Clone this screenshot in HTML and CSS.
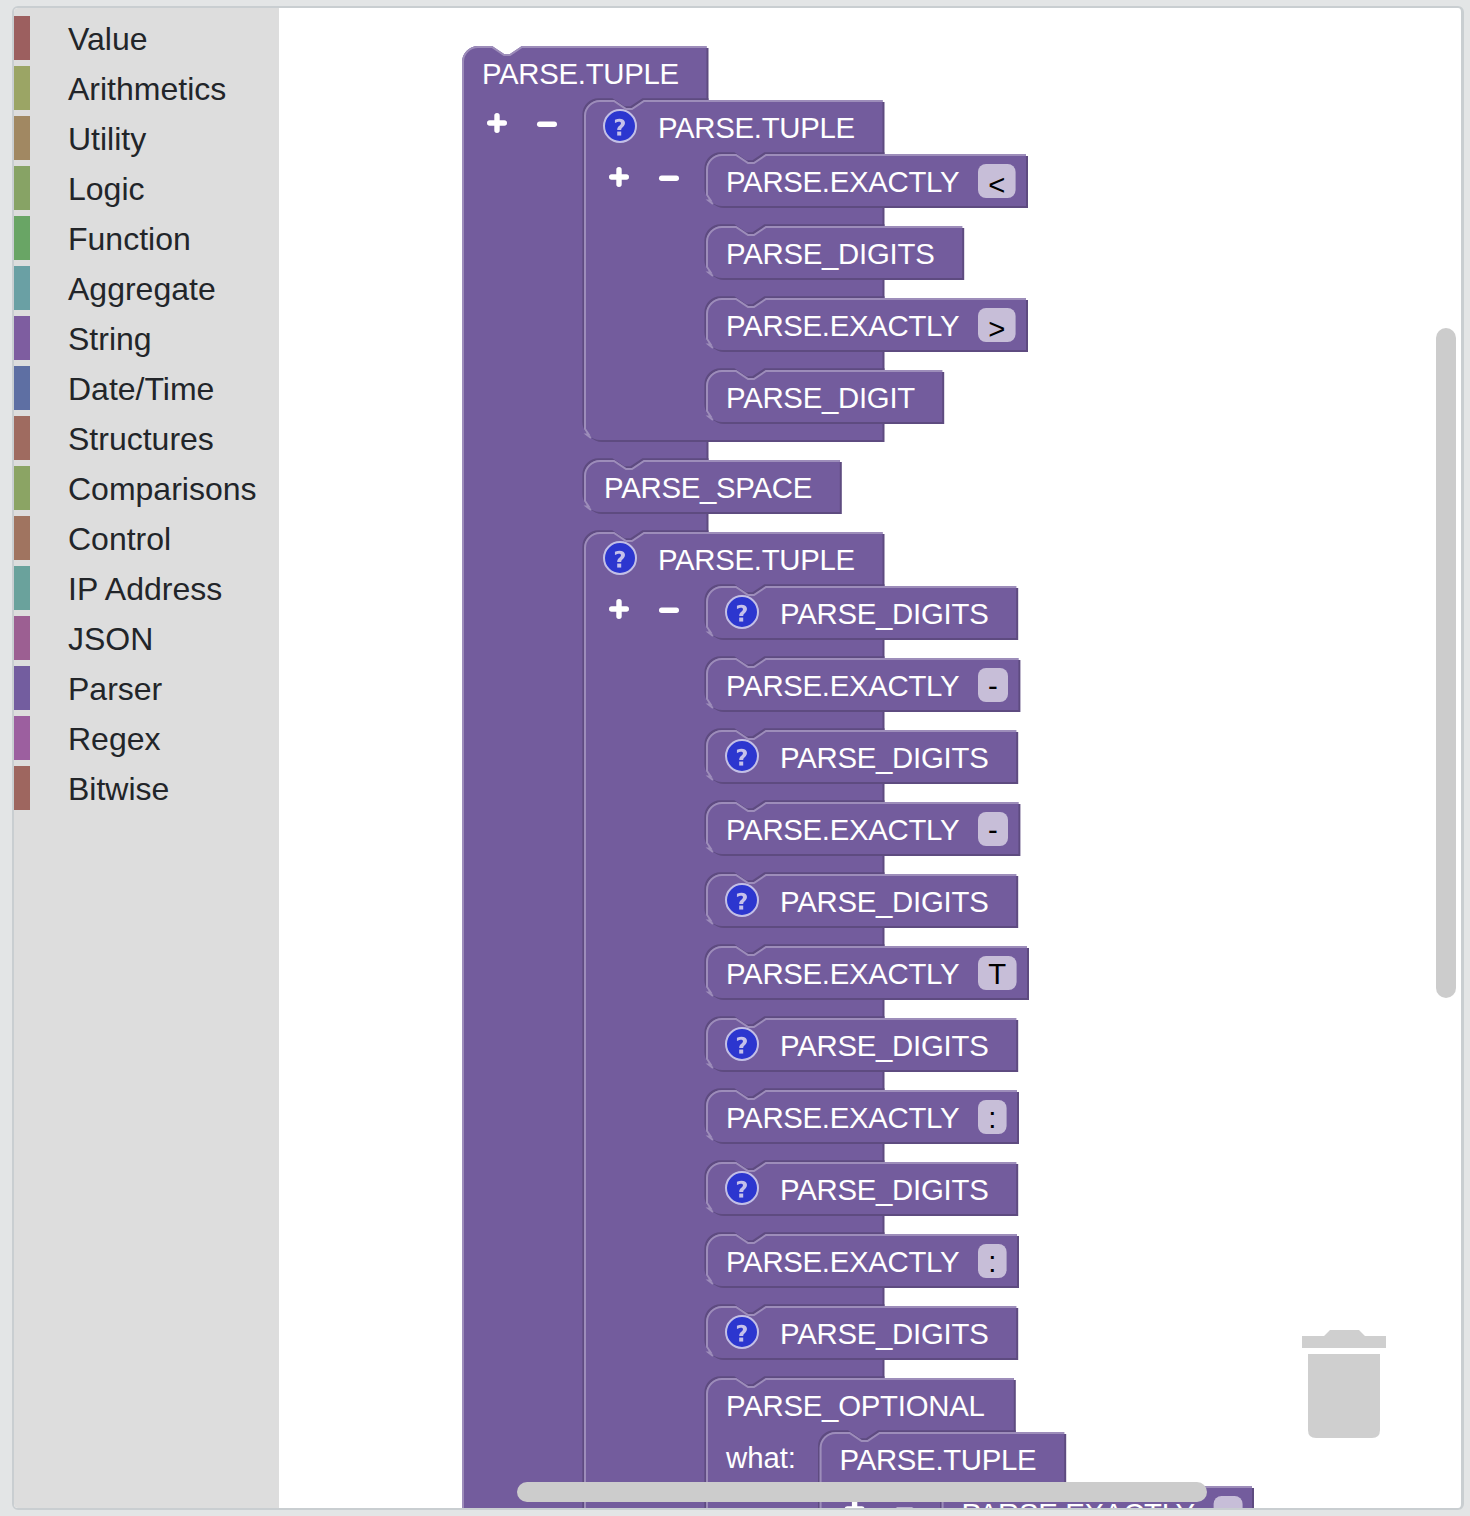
FILE: index.html
```html
<!DOCTYPE html>
<html lang="en">
<head>
<meta charset="utf-8">
<title>Block editor</title>
<link rel="stylesheet" href="styles.css">
</head>
<body>
<main class="editor">
  <nav class="toolbox">
    <div class="category value">Value</div>
    <div class="category arithmetics">Arithmetics</div>
    <div class="category utility">Utility</div>
    <div class="category logic">Logic</div>
    <div class="category function">Function</div>
    <div class="category aggregate">Aggregate</div>
    <div class="category string">String</div>
    <div class="category datetime">Date/Time</div>
    <div class="category structures">Structures</div>
    <div class="category comparisons">Comparisons</div>
    <div class="category control">Control</div>
    <div class="category ip">IP Address</div>
    <div class="category json">JSON</div>
    <div class="category parser">Parser</div>
    <div class="category regex">Regex</div>
    <div class="category bitwise">Bitwise</div>
  </nav>
  <svg class="workspace" viewBox="279 9 1182 1499" width="1182" height="1499">
    <defs>
      <g id="help">
        <circle class="help-disc" cx="16" cy="16" r="16"/>
        <g class="help-mark" transform="translate(-0.4 0) scale(2)">
          <path d="m6.8,10h2c0.003,-0.617 0.271,-0.962 0.633,-1.266 2.875,-2.405 0.607,-5.534 -3.765,-3.874v1.7c3.12,-1.657 3.698,0.118 2.336,1.25 -1.201,0.998 -1.201,1.528 -1.204,2.19z"/>
          <rect x="6.8" y="10.78" width="2" height="2"/>
        </g>
      </g>
      <g id="plus-minus" class="plus-minus">
        <path d="M-7.3,0H7.3M0,-7.3V7.3"/>
        <path d="M42.7,1.3H57.3"/>
      </g>
    </defs>
    <g id="blocks"></g>
    <g class="trash">
      <path d="M1302,1336H1324L1330,1330H1359L1365,1336H1386V1348H1302Z"/>
      <path d="M1308,1354H1380V1430Q1380,1438 1372,1438H1316Q1308,1438 1308,1430Z"/>
    </g>
    <rect class="scrollbar" x="517" y="1482" width="690" height="20" rx="10"/>
    <rect class="scrollbar" x="1436" y="328" width="20" height="670" rx="10"/>
  </svg>
</main>
<script src="blocks.js"></script>
</body>
</html>
```
FILE: styles.css
```css
body {
  margin: 0;
  background: #e3e5e6;
  font-family: "Liberation Sans", Arial, sans-serif;
}

.editor {
  box-sizing: border-box;
  display: flex;
  width: 1452px;
  height: 1504px;
  margin: 6px 0 0 12px;
  border: 2px solid #c9ced1;
  border-top-width: 2px;
  border-right-width: 3px;
  border-radius: 6px;
  background: #fff;
  overflow: hidden;
}

.toolbox {
  box-sizing: border-box;
  flex: 0 0 265px;
  padding-top: 8px;
  background: #ddd;
}

.category {
  height: 44px;
  margin-bottom: 6px;
  padding-left: 38px;
  border-left: 16px solid;
  color: #222529;
  font-size: 32px;
  line-height: 46px;
  white-space: nowrap;
}

.value { border-left-color: #9c5f5f; }
.arithmetics { border-left-color: #9ba565; }
.utility { border-left-color: #a18862; }
.logic { border-left-color: #87a365; }
.function { border-left-color: #69a565; }
.aggregate { border-left-color: #6aa0a4; }
.string { border-left-color: #7e5da0; }
.datetime { border-left-color: #5e6fa3; }
.structures { border-left-color: #9f6b60; }
.comparisons { border-left-color: #8ba464; }
.control { border-left-color: #a07460; }
.ip { border-left-color: #6aa29c; }
.json { border-left-color: #9c5f92; }
.parser { border-left-color: #735d9f; }
.regex { border-left-color: #9c5f9f; }
.bitwise { border-left-color: #9e665f; }

.workspace {
  box-sizing: border-box;
  display: block;
  flex: none;
  margin-top: 1px;
}

.block-rim,
.block-dark { fill: #5e4b80; }
.block-body { fill: #735c9d; }
.block-light {
  fill: none;
  stroke: #9d8dba;
  stroke-width: 2;
}

.label {
  fill: #fff;
  font-size: 29.33px;
}

.field { fill: #c7bed8; }
.field-text {
  fill: #000;
  font-size: 29.33px;
  text-anchor: middle;
}

.help-disc {
  fill: #2c36cf;
  stroke: #c3bfe6;
  stroke-width: 2;
}
.help-mark { fill: #c5c1ea; }

.plus-minus {
  fill: none;
  stroke: #fff;
  stroke-width: 5.4;
  stroke-linecap: round;
}

.trash { fill: #cfcfcf; }
.scrollbar { fill: #ccc; }
```
FILE: blocks.js
```js
const NS = "http://www.w3.org/2000/svg";
const layer = document.getElementById("blocks");

// Advance widths of the block labels.
const LABEL_WIDTH = {
  "PARSE.TUPLE": 197,
  "PARSE.EXACTLY": 233.5,
  "PARSE_DIGITS": 208.7,
  "PARSE_DIGIT": 189.2,
  "PARSE_SPACE": 208.3,
  "PARSE_OPTIONAL": 258.8,
  "what:": 70
};

function add(name, attrs, text) {
  const el = document.createElementNS(NS, name);
  for (const key in attrs) el.setAttribute(key, attrs[key]);
  if (text) el.textContent = text;
  layer.appendChild(el);
}

function outline(x, y, w, h) {
  return `M${x},${y + 16}a16,16 0 0 1 16,-16h14l12,8h6l12,-8H${x + w}v${h}H${x + 16}` +
    `a16,16 0 0 1 -16,-16z`;
}

function label(text, x, y) {
  add("text", { class: "label", x, y, textLength: LABEL_WIDTH[text] }, text);
}

// right is the outer edge of the block's shadow; parentRight bounds the socket rim.
function block({ x, y, right, h = 52, text, help, field, fieldWidth, parentRight, mutator }) {
  const w = right - 2 - x;
  if (parentRight) {
    const rim = Math.min(parentRight, right) - x + 2;
    add("path", { class: "block-rim", d: outline(x - 1.6, y - 1.8, rim - 0.4, h) });
  }
  add("path", { class: "block-dark", d: outline(x + 2, y + 2, w, h) });
  add("path", { class: "block-body", d: outline(x, y, w, h) });
  const kink = h < 1000
    ? `M${x + 7},${y + h - 2}l-4.5,-3.5h2.2L${x + 1},${y + h - 11}`
    : `M${x + 1},${y + h}`;
  add("path", {
    class: "block-light",
    d: `${kink}V${y + 16}a15,15 0 0 1 15,-15h14l12,8h6l12,-8H${x + w}`
  });
  if (help) add("use", { href: "#help", x: x + 20, y: y + 10 });
  label(text, x + (help ? 74 : 20), y + 38);
  if (field !== undefined) {
    const drop = field === "<" || field === ">" ? 41 : 38;
    add("rect", { class: "field", x: x + 272, y: y + 10, width: fieldWidth, height: 34, rx: 8 });
    if (field) {
      add("text", { class: "field-text", x: x + 272 + fieldWidth / 2, y: y + drop }, field);
    }
  }
  if (mutator) add("use", { href: "#plus-minus", x: x + 35, y: y + 77 });
}

block({ x: 462, y: 46, right: 708.5, h: 2000, text: "PARSE.TUPLE", mutator: true });
block({ x: 584, y: 100, right: 884.5, h: 340, text: "PARSE.TUPLE", help: true, mutator: true, parentRight: 708.5 });

const FIELD = { "<": 37.6, ">": 37.6, "-": 30, "T": 38.6, ":": 28.6 };
const item = (y, text, field, help) => {
  const right = field ? 1028 + FIELD[field] - 37.6 : help ? 1018.2 : text === "PARSE_DIGIT" ? 944.2 : 964.2;
  block({ x: 706, y, right, text, field, fieldWidth: FIELD[field], help, parentRight: 884.5 });
};

item(154, "PARSE.EXACTLY", "<");
item(226, "PARSE_DIGITS");
item(298, "PARSE.EXACTLY", ">");
item(370, "PARSE_DIGIT");

block({ x: 584, y: 460, right: 841.8, text: "PARSE_SPACE", parentRight: 708.5 });
block({ x: 584, y: 532, right: 884.5, h: 2000, text: "PARSE.TUPLE", help: true, mutator: true, parentRight: 708.5 });

["", "-", "", "-", "", "T", "", ":", "", ":", ""].forEach((field, i) => {
  const y = 586 + 72 * i;
  if (field) item(y, "PARSE.EXACTLY", field);
  else item(y, "PARSE_DIGITS", undefined, true);
});

block({ x: 706, y: 1378, right: 1015.8, h: 2000, text: "PARSE_OPTIONAL", parentRight: 884.5 });
label("what:", 726, 1468);
block({ x: 819.6, y: 1432, right: 1066.2, h: 2000, text: "PARSE.TUPLE", mutator: true, parentRight: 1015.8 });
block({ x: 941.6, y: 1486, right: 1254, text: "PARSE.EXACTLY", field: "", fieldWidth: 29, parentRight: 1066.2 });
```
